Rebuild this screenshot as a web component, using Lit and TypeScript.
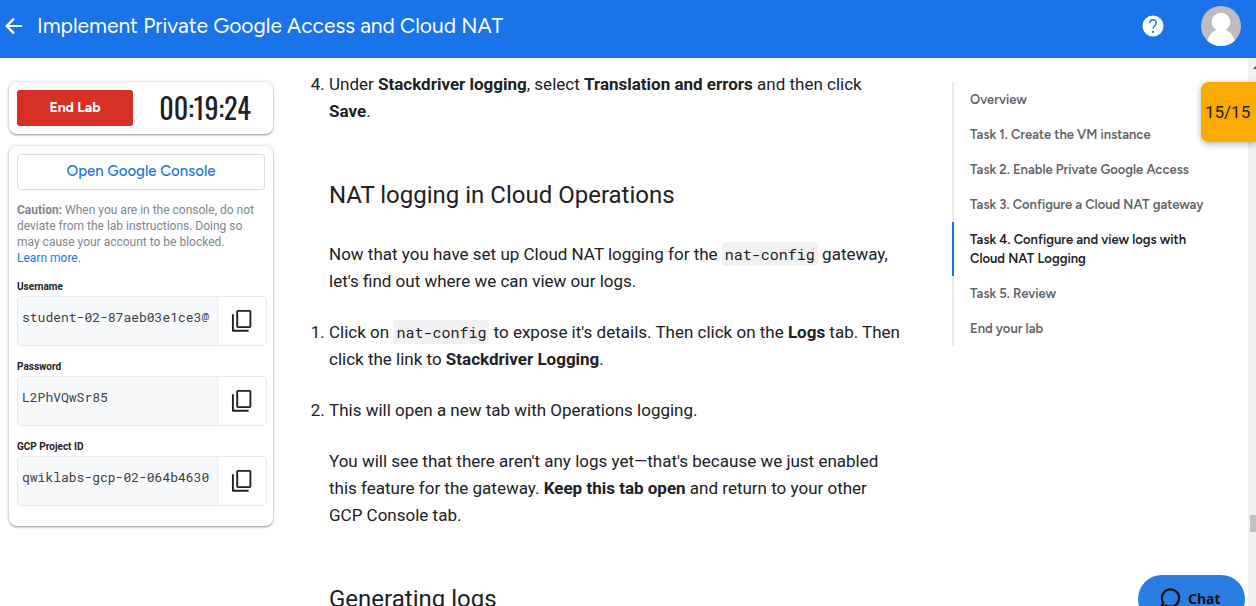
import { LitElement, html, css } from "lit";
import { customElement, property } from "lit/decorators.js";
import { classMap } from "lit/directives/class-map.js";

@customElement("lab-field")
class LabField extends LitElement {
  @property() label = "";
  @property() value = "";

  static styles = css`
    :host { display: block; }
    .label {
      display: block;
      font-size: 10px;
      line-height: 14px;
      font-weight: 700;
      color: #202124;
      margin-bottom: 2px;
    }
    .row {
      display: flex;
      height: 50px;
      box-sizing: border-box;
      border: 1px solid #e8eaed;
      border-radius: 4px;
      overflow: hidden;
    }
    .value {
      flex: 1;
      min-width: 0;
      box-sizing: border-box;
      border: 0;
      border-right: 1px solid #e8eaed;
      margin: 0;
      padding: 0 4px 8px;
      background: #f8f9fa;
      color: #3c4043;
      font-family: "Roboto Mono", "Liberation Mono", monospace;
      font-size: 13px;
      outline: none;
    }
    .copy {
      width: 48px;
      padding: 0;
      border: 0;
      background: #fff;
      color: #202124;
      display: grid;
      place-items: center;
      cursor: pointer;
    }
  `;

  private copy() {
    navigator.clipboard?.writeText(this.value);
  }

  render() {
    return html`
      <label class="label" for="value">${this.label}</label>
      <div class="row">
        <input class="value" id="value" type="text" readonly .value=${this.value} />
        <button class="copy" aria-label="Copy ${this.label}" @click=${this.copy}>
          <svg width="24" height="24" viewBox="0 0 24 24" fill="none" stroke="currentColor" stroke-width="1.9" stroke-linejoin="round">
            <rect x="7.2" y="1.9" width="13.2" height="16.2" rx="0.8" />
            <path d="M2.9 5.2V21.8H18.6" />
          </svg>
        </button>
      </div>
    `;
  }
}

@customElement("app-root")
class AppRoot extends LitElement {
  private credentials = [
    { label: "Username", value: "student-02-87aeb03e1ce3@" },
    { label: "Password", value: "L2PhVQwSr85" },
    { label: "GCP Project ID", value: "qwiklabs-gcp-02-064b4630" },
  ];

  private sections = [
    "Overview",
    "Task 1. Create the VM instance",
    "Task 2. Enable Private Google Access",
    "Task 3. Configure a Cloud NAT gateway",
    "Task 4. Configure and view logs with Cloud NAT Logging",
    "Task 5. Review",
    "End your lab",
  ];

  private current = 4;

  static styles = css`
    :host {
      display: flex;
      flex-direction: column;
      position: relative;
      height: 100vh;
      overflow: hidden;
      background: #fff;
      color: #202124;
      font-family: Roboto, "Liberation Sans", sans-serif;
      --brand: "Google Sans", "Product Sans", Figtree, Lato, sans-serif;
    }
    .header {
      flex: none;
      display: flex;
      align-items: center;
      height: 58px;
      box-sizing: border-box;
      padding: 0 15px 6px 4px;
      background: #1a73e8;
      color: #fff;
    }
    .icon-button {
      display: block;
      padding: 0;
      border: 0;
      background: none;
      color: inherit;
      cursor: pointer;
    }
    .icon-button svg { display: block; }
    .title {
      flex: 1;
      margin: 0 0 0 13px;
      font-family: var(--brand);
      font-size: 21px;
      line-height: 28px;
      font-weight: 400;
    }
    .account { margin-left: 36px; }
    .body {
      flex: 1;
      min-height: 0;
      display: grid;
      grid-template-columns: 273px minmax(0, 1fr) 296px 8px;
    }
    .side {
      display: flex;
      flex-direction: column;
      gap: 12px;
      padding: 24px 0 0 9px;
    }
    .card {
      border-radius: 8px;
      background: #fff;
      box-shadow: 0 1px 2px rgba(60, 64, 67, 0.5), 0 0 4px rgba(60, 64, 67, 0.18);
    }
    .timer-card {
      display: flex;
      align-items: center;
      padding: 8px;
    }
    .end {
      width: 116px;
      height: 36px;
      padding: 0 0 2px;
      border: 0;
      border-radius: 3px;
      background: #d93025;
      color: #fff;
      font-family: var(--brand);
      font-size: 14px;
      font-weight: 700;
      cursor: pointer;
    }
    .timer {
      flex: 1;
      padding-left: 12px;
      text-align: center;
      font-family: Oswald, "Liberation Sans Narrow", "Roboto Condensed", Roboto, sans-serif;
      font-size: 28px;
      line-height: 36px;
      font-weight: 400;
    }
    .lab-card {
      display: flex;
      flex-direction: column;
      gap: 14px;
      padding: 8px 6px 20px 8px;
    }
    .console {
      height: 36px;
      margin-right: 2px;
      margin-bottom: -2px;
      padding: 0 0 2px;
      border: 1px solid #dadce0;
      border-radius: 4px;
      background: #fff;
      color: #1a73e8;
      font-family: var(--brand);
      font-size: 15px;
      font-weight: 500;
      cursor: pointer;
    }
    .caution {
      margin: 0;
      font-size: 12px;
      line-height: 16px;
      color: #80868b;
    }
    .link { display: block; color: #1a73e8; text-decoration: none; }
    .main {
      overflow: hidden;
      padding: 13px 48px 0 56px;
      font-size: 17px;
      line-height: 27px;
    }
    .main p { margin: 0 0 24px; }
    .heading {
      margin: 54px 0 30px;
      font-size: 24px;
      line-height: 32px;
      font-weight: 400;
    }
    .steps { margin: 0; padding: 0; }
    .main .last { margin: 0; }
    .code {
      padding: 2px 3px;
      border-radius: 2px;
      background: #f1f1f1;
      font-family: "Roboto Mono", "Liberation Mono", monospace;
      font-size: 15px;
    }
    .outline { padding: 24px 40px 0 0; }
    .outline-item {
      display: block;
      padding: 8px 0 8px 16px;
      border-left: 2px solid #e8eaed;
      color: #5f6368;
      font-family: var(--brand);
      font-size: 13px;
      line-height: 19px;
      font-weight: 600;
      text-decoration: none;
    }
    .current { border-color: #1a73e8; color: #202124; }
    .track {
      display: flex;
      flex-direction: column;
      align-items: flex-end;
      background: #f1f1f1;
      overflow: hidden;
    }
    .arrow { flex: none; margin-top: 7px; }
    .thumb { width: 6px; height: 17px; margin-top: 445px; background: #c1c1c1; flex: none; }
    .score {
      position: absolute;
      top: 82px;
      right: 0;
      width: 55px;
      height: 60px;
      box-sizing: border-box;
      padding-left: 4px;
      display: flex;
      align-items: center;
      border-radius: 8px 0 0 8px;
      background: #f9ab00;
      box-shadow: 0 2px 6px rgba(60, 64, 67, 0.4);
      font-size: 17px;
    }
    .chat {
      position: absolute;
      right: 11px;
      bottom: -17px;
      width: 107px;
      height: 48px;
      padding: 0 0 2px 20px;
      display: flex;
      align-items: center;
      gap: 6px;
      border: 0;
      border-radius: 24px;
      background: #2a7de1;
      color: #111;
      font-family: "Noto Sans", sans-serif;
      font-size: 14px;
      font-weight: 700;
      cursor: pointer;
    }
  `;

  render() {
    return html`
      <header class="header">
        <button class="icon-button" aria-label="Back">
          <svg width="20" height="20" viewBox="0 0 20 20" fill="none" stroke="currentColor" stroke-width="2.2">
            <path d="M18 10H2.5M10 2.6L2.6 10L10 17.4" />
          </svg>
        </button>
        <h1 class="title">Implement Private Google Access and Cloud NAT</h1>
        <button class="icon-button" aria-label="Help">
          <svg width="24" height="24" viewBox="0 0 24 24">
            <circle cx="12" cy="12" r="10.5" fill="#fff" />
            <path d="M8.8 9.2C8.8 4.6 15.4 4.7 15.4 8.8C15.4 11.4 12.1 11.6 12.1 14.8" fill="none" stroke="#1a73e8" stroke-width="1.5" />
            <circle cx="12.1" cy="17.9" r="1.1" fill="#1a73e8" />
          </svg>
        </button>
        <button class="icon-button account" aria-label="Account">
          <svg width="40" height="40" viewBox="0 0 40 40">
            <defs><clipPath id="disc"><circle cx="20" cy="20" r="20" /></clipPath></defs>
            <g clip-path="url(#disc)">
              <rect width="40" height="40" fill="#bdbdbd" />
              <circle cx="20" cy="16" r="9.3" fill="#fff" />
              <path d="M4.5 40C7 30 11 25 16 24H24C29 25 33 30 35.5 40Z" fill="#fff" />
            </g>
          </svg>
        </button>
      </header>
      <div class="body">
        <aside class="side">
          <div class="card timer-card">
            <button class="end">End Lab</button>
            <div class="timer" role="timer">00:19:24</div>
          </div>
          <div class="card lab-card">
            <button class="console">Open Google Console</button>
            <p class="caution">
              <b>Caution:</b> When you are in the console, do not deviate from the lab instructions.
              Doing so may cause your account to be blocked. <a class="link" href="#learn">Learn more.</a>
            </p>
            ${this.credentials.map(
              (c) => html`<lab-field .label=${c.label} .value=${c.value}></lab-field>`
            )}
          </div>
        </aside>
        <main class="main">
          <ol class="steps" start="4">
            <li>Under <b>Stackdriver logging</b>, select <b>Translation and errors</b> and then click <b>Save</b>.</li>
          </ol>
          <h2 class="heading">NAT logging in Cloud Operations</h2>
          <p>
            Now that you have set up Cloud NAT logging for the <code class="code">nat-config</code> gateway,
            let's find out where we can view our logs.
          </p>
          <ol class="steps">
            <li>
              <p>
                Click on <code class="code">nat-config</code> to expose it's details. Then click on the
                <b>Logs</b> tab. Then click the link to <b>Stackdriver Logging</b>.
              </p>
            </li>
            <li>
              <p>This will open a new tab with Operations logging.</p>
              <p class="last">
                You will see that there aren't any logs yet—that's because we just enabled this feature
                for the gateway. <b>Keep this tab open</b> and return to your other GCP Console tab.
              </p>
            </li>
          </ol>
          <h2 class="heading">Generating logs</h2>
        </main>
        <nav class="outline" aria-label="Lab sections">
          ${this.sections.map(
            (s, i) => html`<a href="#step-${i}" class=${classMap({ "outline-item": true, current: i === this.current })}>${s}</a>`
          )}
        </nav>
        <div class="track">
          <svg class="arrow" width="3" height="5" viewBox="0 0 3 5"><path d="M0 4L3 1V4Z" fill="#505050" /></svg>
          <div class="thumb"></div>
        </div>
      </div>
      <div class="score">15/15</div>
      <button class="chat">
        <svg width="24" height="24" viewBox="0 0 24 24" fill="none" stroke="currentColor" stroke-width="2.2" stroke-linejoin="round">
          <path d="M5.2 16.6A8.6 8.6 0 1 1 8.6 19.7L3.6 20.6Z" />
        </svg>
        Chat
      </button>
    `;
  }
}
